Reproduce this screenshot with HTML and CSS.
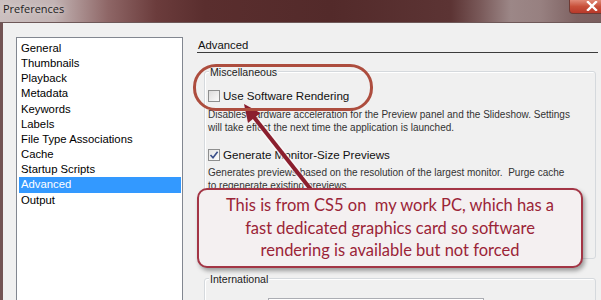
FILE: index.html
```html
<!DOCTYPE html>
<html>
<head>
<meta charset="utf-8">
<link rel="stylesheet" href="styles.css">
</head>
<body>
<div class="win">
  <div class="titlebar">
    <span class="title">Preferences</span>
    <div class="close">
      <svg width="12" height="10" viewBox="0 0 12 10"><path d="M2 1 L10 9 M10 1 L2 9" stroke="#fff" stroke-width="2.4" stroke-linecap="square"/></svg>
    </div>
  </div>
  <div class="body">
    <ul class="list">
      <li>General</li>
      <li>Thumbnails</li>
      <li>Playback</li>
      <li>Metadata</li>
      <li>Keywords</li>
      <li>Labels</li>
      <li>File Type Associations</li>
      <li>Cache</li>
      <li>Startup Scripts</li>
      <li class="sel">Advanced</li>
      <li>Output</li>
    </ul>
    <div class="panel">
      <div class="heading">Advanced</div>
      <div class="group misc">
        <div class="legend">Miscellaneous</div>
        <div class="check first"><span class="box"></span><span>Use Software Rendering</span></div>
        <p class="desc d1">Disables hardware acceleration for the Preview panel and the Slideshow. Settings<br>will take effect the next time the application is launched.</p>
        <div class="check second"><span class="box on"><svg width="10" height="10" viewBox="0 0 10 10"><path d="M1.5 5 L4 7.8 L8.6 1.8" fill="none" stroke="#3a4f8a" stroke-width="1.6"/></svg></span><span>Generate Monitor-Size Previews</span></div>
        <p class="desc d2">Generates previews based on the resolution of the largest monitor.&nbsp; Purge cache<br>to regenerate existing previews.</p>
      </div>
      <div class="group intl">
        <div class="legend">International</div>
        <div class="field"></div>
      </div>
    </div>
  </div>

  <svg class="arrow" width="601" height="300" viewBox="0 0 601 300">
    <line x1="316" y1="196" x2="253" y2="116" stroke="rgba(255,255,255,0.55)" stroke-width="7"/>
    <line x1="316" y1="196" x2="253" y2="116" stroke="#8b1f2e" stroke-width="4"/>
    <polygon points="244,104 260.5,113 248,123" fill="#8b1f2e"/>
  </svg>
  <div class="ring"></div>
  <div class="callout">This is from CS5 on&nbsp; my work PC, which has a<br>fast dedicated graphics card so software<br>rendering is available but not forced</div>
</div>
</body>
</html>
```

FILE: styles.css
```css
html, body {
  margin: 0;
  padding: 0;
}
body {
  background: #f0f0f0;
  font-family: "Liberation Sans", Arial, sans-serif;
}
.win {
  position: relative;
  width: 601px;
  height: 300px;
  overflow: hidden;
  background: #f0f0f0;
}
.titlebar {
  height: 22px;
  border-bottom: 1px solid #6e5858;
  display: flex;
  justify-content: space-between;
  align-items: flex-start;
  background: linear-gradient(to right, #cbbfbf 0%, #c2b3b3 9%, #8e6666 18%, #6b3c3c 26%, #5a2e2e 34%, #532a2a 55%, #5c3434 75%, #7a5a5a 80%, #9c8787 85%, #978080 90%, #7e6262 96%, #7a5e5e 100%);
}
.title {
  font-family: "Open Sans", "Liberation Sans", sans-serif;
  font-size: 11px;
  line-height: 18px;
  margin-left: 3px;
  color: #1e1e1e;
  text-shadow: 0 0 6px rgba(255,255,255,0.7);
}
.close {
  width: 46px;
  height: 14px;
  margin-right: -14px;
  border-radius: 0 0 0 4px;
  background: linear-gradient(to bottom, #e08a78 0%, #c8503a 50%, #b8392a 100%);
  border: 1px solid #6e3a34;
  border-top: 0;
  box-sizing: border-box;
  display: flex;
  justify-content: center;
  align-items: center;
}
.close svg { display: block; margin-top: -2px; }
.body {
  display: flex;
  align-items: flex-start;
  border-left: 3px solid #735454;
  padding: 14px 0 0 13px;
  height: 300px;
}
.list {
  list-style: none;
  margin: 0;
  width: 167px;
  height: 280px;
  box-sizing: border-box;
  border: 1px solid #828790;
  background: #fff;
  padding: 3px 1px 0 2px;
  font-size: 11.3px;
  color: #000;
}
.list li {
  line-height: 15.15px;
  padding-left: 2px;
}
.list li.sel {
  background: #3399ff;
  color: #fff;
}
.panel {
  margin-left: 14px;
  width: 401px;
  padding-top: 1px;
}
.heading {
  font-size: 11.3px;
  line-height: 14px;
  padding-left: 1px;
  border-bottom: 1px solid #3c3c3c;
  color: #111;
}
.group {
  margin: 18px 2px 0 7px;
  border: 1px solid #d5d9dd;
  border-radius: 3px;
  box-shadow: inset 1px 1px 0 #fff;
  padding: 0 0 0 3px;
  box-sizing: border-box;
}
.misc { height: 188px; }
.legend {
  display: block;
  width: max-content;
  font-size: 10.6px;
  line-height: 14px;
  margin: -7px 0 0 1px;
  padding: 0 1px;
  background: #f0f0f0;
  color: #222;
}
.check {
  display: flex;
  align-items: center;
  gap: 3px;
  font-size: 11.6px;
  line-height: 14px;
  color: #111;
}
.check.first { margin-top: 10px; }
.check.second { margin-top: 14px; }
.box {
  width: 12px;
  height: 12px;
  box-sizing: border-box;
  border: 1px solid #8e8f8f;
  background: linear-gradient(135deg, #dcdcdc, #fbfbfb);
  display: flex;
  align-items: center;
  justify-content: center;
}
.box.on { background: linear-gradient(135deg, #e4e4e4, #fdfdfd); }
.desc {
  margin: 0;
  font-size: 10px;
  line-height: 12.5px;
  color: #333;
  white-space: nowrap;
}
.d1 { margin-top: 6px; }
.d2 { margin-top: 5px; }
.intl {
  margin-top: 19px;
  height: 60px;
}
.field {
  margin: 12px 0 0 60px;
  width: 214px;
  height: 20px;
  border: 1px solid #abadb3;
  background: #fff;
}
.arrow {
  position: absolute;
  left: 0;
  top: 0;
}
.ring {
  position: absolute;
  left: 193px;
  top: 64px;
  width: 180px;
  height: 47px;
  box-sizing: border-box;
  border: 3px solid #ad4d3e;
  border-radius: 23px;
}
.callout {
  position: absolute;
  left: 197px;
  top: 188px;
  width: 386px;
  height: 80px;
  box-sizing: border-box;
  border: 2px solid #a33545;
  border-radius: 10px;
  background: #f4f0f1;
  box-shadow: 2px 3px 4px rgba(0,0,0,0.35);
  padding-top: 4px;
  text-align: center;
  font-family: Lato, "Liberation Sans", sans-serif;
  font-size: 16.5px;
  line-height: 22.5px;
  color: #9b2437;
}
```
